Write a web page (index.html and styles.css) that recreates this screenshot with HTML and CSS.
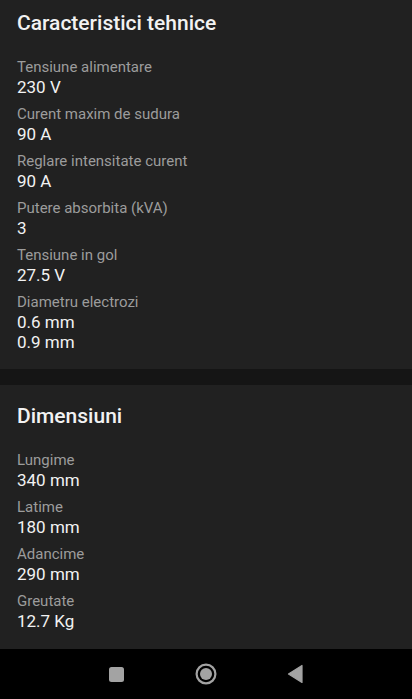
FILE: index.html
```html
<!DOCTYPE html>
<html lang="ro">
<head>
<meta charset="utf-8">
<title>Caracteristici tehnice</title>
<link rel="stylesheet" href="styles.css">
</head>
<body>
<div class="screen">
  <div class="content">
    <section class="section first">
      <h2 class="title">Caracteristici tehnice</h2>
      <dl class="specs">
        <div class="spec"><dt>Tensiune alimentare</dt><dd>230 V</dd></div>
        <div class="spec"><dt>Curent maxim de sudura</dt><dd>90 A</dd></div>
        <div class="spec"><dt>Reglare intensitate curent</dt><dd>90 A</dd></div>
        <div class="spec"><dt>Putere absorbita (kVA)</dt><dd>3</dd></div>
        <div class="spec"><dt>Tensiune in gol</dt><dd>27.5 V</dd></div>
        <div class="spec"><dt>Diametru electrozi</dt><dd>0.6 mm</dd><dd>0.9 mm</dd></div>
      </dl>
    </section>
    <div class="divider"></div>
    <section class="section second">
      <h2 class="title">Dimensiuni</h2>
      <dl class="specs">
        <div class="spec"><dt>Lungime</dt><dd>340 mm</dd></div>
        <div class="spec"><dt>Latime</dt><dd>180 mm</dd></div>
        <div class="spec"><dt>Adancime</dt><dd>290 mm</dd></div>
        <div class="spec"><dt>Greutate</dt><dd>12.7 Kg</dd></div>
      </dl>
    </section>
  </div>
  <nav class="navbar">
    <svg class="nav-icon nav-recent" width="15" height="15" viewBox="0 0 15 15"><rect x="0" y="0" width="15" height="15" rx="2.5" fill="#a3a3a3"/></svg>
    <svg class="nav-icon nav-home" width="24" height="24" viewBox="0 0 24 24"><circle cx="12" cy="12" r="9.4" fill="none" stroke="#a3a3a3" stroke-width="2.2"/><circle cx="12" cy="12" r="6" fill="#a3a3a3"/></svg>
    <svg class="nav-icon nav-back" width="16" height="20" viewBox="0 0 16 20"><path d="M15 1.5 L15 18.5 L1.5 10 Z" fill="#a3a3a3" stroke="#a3a3a3" stroke-width="1.2" stroke-linejoin="round"/></svg>
  </nav>
</div>
</body>
</html>
```
FILE: styles.css
```css
* { box-sizing: border-box; }
html, body { margin: 0; padding: 0; background: #212121; }
body { font-family: Roboto, "Noto Sans", sans-serif; }
.screen { width: 412px; height: 699px; display: flex; flex-direction: column; overflow: hidden; }
.content { flex: 1; display: flex; flex-direction: column; background: #212121; }
.section { padding: 0 17px; }
.section.first { padding-top: 9px; padding-bottom: 16px; }
.section.second { padding-top: 17px; padding-bottom: 16px; flex: 1; }
.title { margin: 0 0 20px; font-size: 21px; line-height: 28px; font-weight: 500; color: #f2f2f2; }
.specs { margin: 0; display: flex; flex-direction: column; gap: 6px; }
.spec { display: flex; flex-direction: column; }
.spec dt { font-size: 15px; line-height: 20px; color: #9c9c9c; }
.spec dd { margin: 0; font-size: 17px; line-height: 21px; color: #f2f2f2; }
.spec dd + dd { margin-top: -1px; }
.divider { height: 16px; background: #151515; }
.navbar { height: 50px; background: #000; display: flex; align-items: center; justify-content: flex-start; padding-left: 109px; }
.nav-icon { display: block; }
.nav-home { margin-left: 70px; }
.nav-back { margin-left: 69px; }
```
